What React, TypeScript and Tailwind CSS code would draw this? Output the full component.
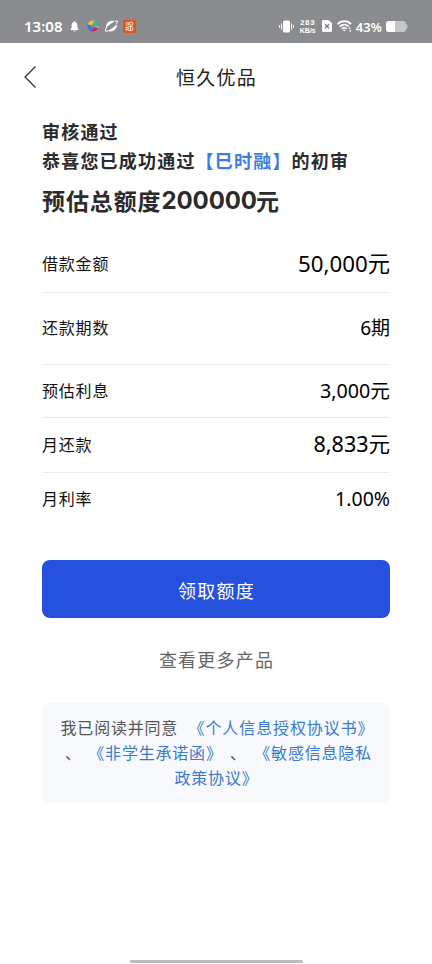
import React from 'react';

interface LoanRow {
  label: string;
  value: string;
  rowClass: string;
  valueClass: string;
}

const rows: LoanRow[] = [
  { label: '借款金额', value: '50,000元', rowClass: 'h-14 border-b', valueClass: 'text-[22.3px]' },
  { label: '还款期数', value: '6期', rowClass: 'h-[72px] border-b', valueClass: 'text-[19px]' },
  { label: '预估利息', value: '3,000元', rowClass: 'h-[53px] border-b', valueClass: 'text-[19.7px]' },
  { label: '月还款', value: '8,833元', rowClass: 'h-[55px] border-b', valueClass: 'text-[21.5px]' },
  { label: '月利率', value: '1.00%', rowClass: 'h-[52px]', valueClass: 'text-[19.5px]' },
];

const BellIcon = () => (
  <svg className="ml-[8px] h-[11px] w-[9px]" viewBox="0 0 9 11" fill="#fff">
    <path d="M4.5 0.3a1 1 0 0 1 .9.9c1.4.4 2 1.500 2 3V7l1.200 1.500v.5H.4v-.5L1.600 7V4.200c0-1.500.6-2.600 2-3a1 1 0 0 1 .9-.9zM3.200 9.500h2.600c-.2.8-.7 1.100-1.300 1.100s-1.100-.3-1.300-1.100z" />
  </svg>
);

const PinwheelIcon = () => (
  <svg className="ml-[8px] h-3 w-3" viewBox="0 0 12 12">
    <path d="M1 4.500C1.500 1.500 4 0 7 .6L6.600 3.800 3.500 5z" fill="#f3c52f" />
    <path d="M7 .6c3 .4 4.800 2.600 4.600 5.600L8.500 6.500 6.200 4z" fill="#35b896" />
    <path d="M11.600 6.200c0 .9-.3 1.500-.6 2.200L8 7.500 8 5.500z" fill="#66cfc4" />
    <path d="M11 8.200c-1.200 2.600-3.600 3.700-6.500 3.200L6 8.200 8.600 7z" fill="#d91f63" />
    <path d="M4.700 11.400C1.500 10.800-.3 7.800.6 4.800L3.600 5.300 5.500 8.500z" fill="#2a7fe0" />
  </svg>
);

const OrbitIcon = () => (
  <svg className="ml-[6px] h-3 w-[13px]" viewBox="0 0 13 12" fill="#fff">
    <path d="M1 7.800C.6 3.800 3.600.7 7.300.7c1 0 2 .2 2.700.6C8 2 3.800 5 1 7.800z" />
    <path d="M11.900 4.200c.5 4-2.600 7.200-6.300 7.200-1 0-2-.2-2.700-.7C5 10 9.200 7 11.900 4.200z" />
    <path d="M1.800 7C.8 8.200.1 9.800.5 11.200M9.800 1.300c1-.5 1.900-.6 2.600-.2.1 1-.5 2.100-1.200 3M.5 11.200c1 .2 2-.1 3-.6" fill="none" stroke="#fff" />
  </svg>
);

const VideoAppIcon = () => (
  <svg className="ml-[5px] h-[13px] w-[13px]" viewBox="0 0 13 13" fill="none" stroke="#ffe9dc">
    <rect width="13" height="13" rx="2.500" fill="#e4541c" stroke="none" />
    <circle cx="4.700" cy="3.900" r="1.400" />
    <circle cx="8.100" cy="3.700" r="1.700" />
    <rect x="5.200" y="6.500" width="4.600" height="4" rx="1" />
    <path d="M5.200 7.800L3 6.800v3.400l2.200-.8M7.500 6.500v4" />
  </svg>
);

const VibrateIcon = () => (
  <svg className="h-[13px] w-[15px]" viewBox="0 0 15 13" fill="#fff">
    <rect x="4" y="0.500" width="7" height="12" rx="1.500" />
    <path d="M2 3.500h1v6H2zM0 5h1v3H0zM12 3.500h1v6h-1zM14 5h1v3h-1z" />
  </svg>
);

const SimIcon = () => (
  <svg className="h-3 w-[10px]" viewBox="0 0 10 12">
    <path d="M1.500 0h5L10 3v7.500A1.500 1.500 0 0 1 8.500 12h-7A1.500 1.500 0 0 1 0 10.500v-9A1.500 1.500 0 0 1 1.500 0z" fill="#fff" />
    <path d="M3 4.300l4 4M7 4.300l-4 4" stroke="#77787c" strokeWidth="1.300" />
  </svg>
);

const WifiIcon = () => (
  <svg className="h-3 w-[15px]" viewBox="0 0 15 12" fill="none" stroke="#fff">
    <path d="M.6 4.200C4.400.2 10.200.2 14 4.200" strokeWidth="1.800" />
    <path d="M2.800 6.700c2.600-2.700 6.400-2.700 9 0" strokeWidth="1.700" />
    <path d="M4.800 8.900c1.400-1.500 3.500-1.500 4.900 0" strokeWidth="1.500" />
    <path d="M5.900 9.800h2.800l-1.400 1.600z" fill="#fff" stroke="none" />
    <path d="M11.800 7.500h1.500v1.500h-1.500zM12.500 10h1.500v1.500h-1.500z" fill="#fff" stroke="none" />
  </svg>
);

const BatteryIcon = () => (
  <svg className="h-[11px] w-[22px]" viewBox="0 0 22 11">
    <rect width="20" height="11" rx="3" fill="#c6c7c9" />
    <path d="M20 3c2 .6 2 4.400 0 5z" fill="#c6c7c9" />
    <path d="M3 0h6v11H3a3 3 0 0 1-3-3V3a3 3 0 0 1 3-3z" fill="#fff" />
  </svg>
);

const StatusBar: React.FC = () => (
  <div className="flex h-[43px] items-center bg-[#8b8c90] pt-[9px] pl-6 pr-6 font-['Noto_Sans'] text-white">
    <span className="pt-px text-[15px] leading-none font-semibold">13:08</span>
    <BellIcon />
    <PinwheelIcon />
    <OrbitIcon />
    <VideoAppIcon />
    <div className="ml-auto flex items-center">
      <VibrateIcon />
      <div className="ml-[5px] flex w-[18px] flex-col items-center font-['Liberation_Sans'] font-bold">
        <span className="text-[8px] leading-[9px] tracking-[0.8px]">283</span>
        <span className="text-[7px] leading-[8px] whitespace-nowrap">KB/s</span>
      </div>
      <div className="ml-[5px] flex items-center">
        <SimIcon />
      </div>
      <div className="ml-[5px] flex items-center">
        <WifiIcon />
      </div>
      <span className="mt-[2px] ml-[4px] text-[13px] leading-none font-semibold">43%</span>
      <div className="ml-[4px] flex items-center">
        <BatteryIcon />
      </div>
    </div>
  </div>
);

export default function App() {
  return (
    <div className="flex h-[964px] w-[432px] flex-col bg-white font-['Noto_Sans_CJK_SC',sans-serif] text-[#111]">
      <StatusBar />

      <header className="flex h-[68px] items-center px-6">
        <button className="w-8" aria-label="返回">
          <svg className="h-[22px] w-3" viewBox="0 0 12 22" fill="none" stroke="#333" strokeWidth="1.300">
            <path d="M11.500 0.500L1 11l10.500 10.500" />
          </svg>
        </button>
        <h1 className="flex-1 pl-px text-center text-[19px] tracking-[1.2px] text-[#222]">恒久优品</h1>
        <div className="w-8" />
      </header>

      <main className="flex flex-col px-[42px]">
        <section className="pt-[5px] font-bold text-[#2b2b2d]">
          <p className="text-[18px] leading-[30px] tracking-[1.2px]">审核通过</p>
          <p className="text-[18px] leading-[29px] tracking-[1.2px] whitespace-nowrap">
            恭喜您已成功通过<span className="text-[#3b7de0]">【巳时融】</span>的初审
          </p>
          <p className="mt-[6px] flex h-[39px] items-center pb-px text-[23px] leading-[36px] tracking-[0.9px]">
            预估总额度<span className="pt-[2px] font-['Inter'] text-[24px] tracking-[-0.1px]">200000</span>
            <span className="-ml-px">元</span>
          </p>
        </section>

        <section className="mt-[17px]">
          {rows.map((row) => (
            <div key={row.label} className={`flex items-center justify-between border-[#ececec] pb-[2px] ${row.rowClass}`}>
              <span className="pb-px text-[16px] tracking-[0.8px]">{row.label}</span>
              <span className={`pt-px font-['Noto_Sans','Noto_Sans_CJK_SC',sans-serif] text-black ${row.valueClass}`}>
                {row.value}
              </span>
            </div>
          ))}
        </section>

        <button className="mt-[35px] h-[58px] rounded-lg bg-[#2650de] pt-[2px] pl-px text-[18px] tracking-[1.2px] text-white">
          领取额度
        </button>
        <button className="mt-[26px] h-[30px] pl-px text-[18px] tracking-[1.2px] text-[#666]">查看更多产品</button>

        <div className="mt-[29px] h-[100px] rounded-lg bg-[#f7f9fc] pt-3 text-center text-[16px] leading-[25px] tracking-[0.8px] whitespace-nowrap text-[#555]">
          <p className="pl-[3px]">
            我已阅读并同意 <span className="ml-[6px] tracking-[0.9px] text-[#3a79cc]">《个人信息授权协议书》</span>
          </p>
          <p className="pl-[5px]">
            、 <span className="ml-[2px] text-[#3a79cc]">《非学生承诺函》</span>
            <span className="mx-[3px]"> 、 </span>
            <span className="text-[#3a79cc]">《敏感信息隐私</span>
          </p>
          <p className="pl-px text-[#3a79cc]">政策协议》</p>
        </div>
      </main>

      <div className="mt-auto mb-[1px] h-[3px] w-[173px] self-center rounded-full bg-[#bcbcbc]" />
    </div>
  );
}
